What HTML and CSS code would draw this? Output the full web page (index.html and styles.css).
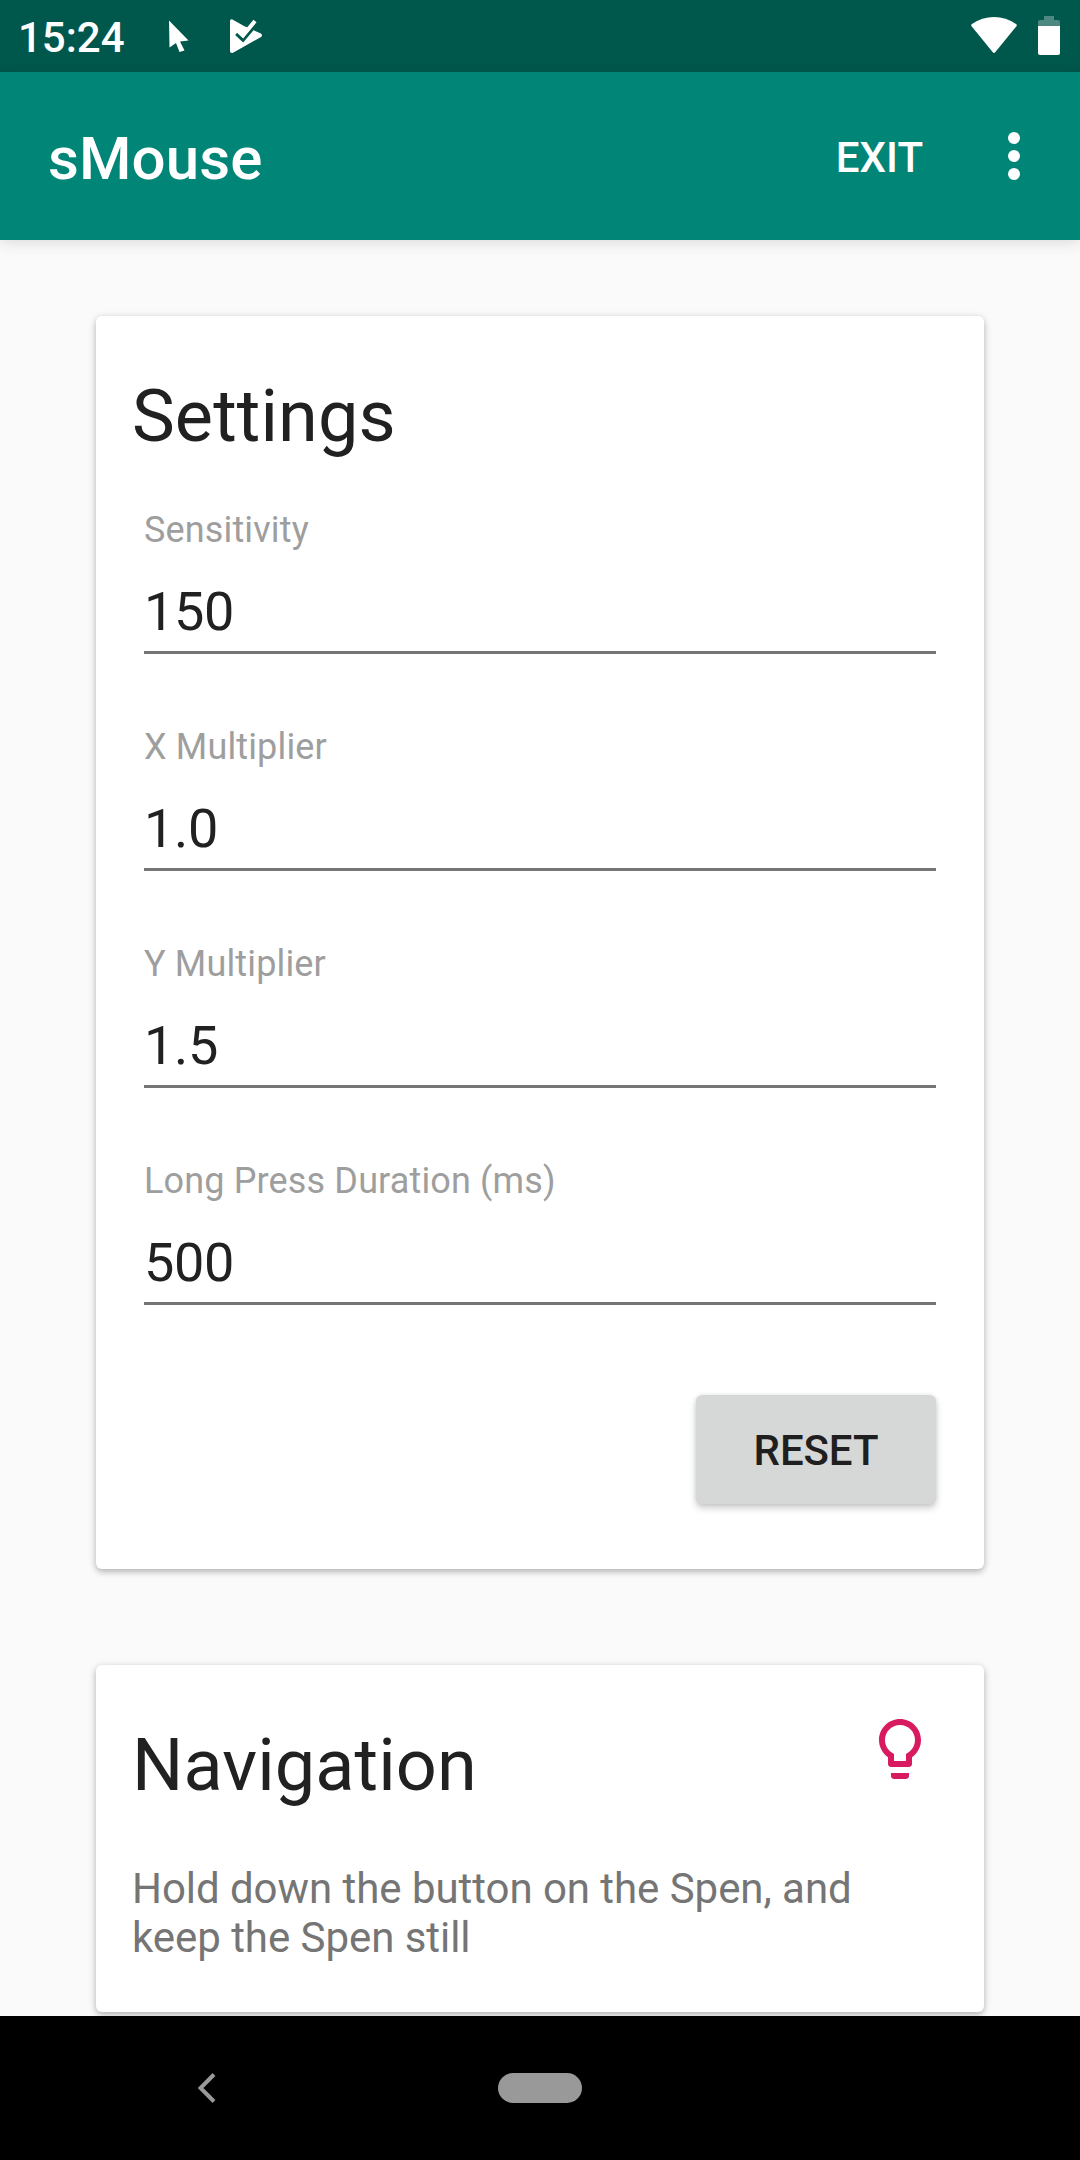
FILE: index.html
```html
<!DOCTYPE html>
<html lang="en">
<head>
	<meta charset="utf-8">
	<title>sMouse</title>
	<link rel="stylesheet" href="styles.css">
</head>
<body>
	<div class="status-bar">
		<span class="clock">15:24</span>
		<svg class="icon-cursor" width="20" height="33" viewBox="0 0 20 33">
			<path d="M0 0.5L19.5 20.5L11 21.5L15.5 30.5L10.5 32L7 23L0.5 27.5Z" fill="#fff"/>
		</svg>
		<svg class="icon-play" width="32" height="34" viewBox="0 0 32 34">
			<path d="M0 2Q0 0 2 0.3L14 7L31 14.5Q33 16.5 31 18L3 33.7Q0 34.500 0 32Z" fill="#fff"/>
			<path d="M6.500 14.500L13 20.500L26.500 4.500" fill="none" stroke="#00574b" stroke-width="4"/>
			<path d="M8 12L13 16.500L25 2" fill="none" stroke="#fff" stroke-width="4"/>
		</svg>
		<svg class="icon-wifi" width="46" height="36" viewBox="0 0 46 36">
			<path d="M0.600 9.300Q-0.400 8 1 7Q11 0 23 0T45 7Q46.400 8 45.400 9.300L24.200 35.200Q23 36.600 21.800 35.200Z" fill="#fff"/>
		</svg>
		<svg class="icon-battery" width="22" height="39" viewBox="0 0 22 39">
			<path d="M6 0H16V4H20Q22 4 22 6V10H0V6Q0 4 2 4H6Z" fill="#fff" fill-opacity=".3"/>
			<path d="M0 10H22V37Q22 39 20 39H2Q0 39 0 37Z" fill="#fff"/>
		</svg>
	</div>

	<header class="app-bar">
		<h1 class="app-title">sMouse</h1>
		<a class="exit">EXIT</a>
		<svg class="icon-more" width="12" height="48" viewBox="0 0 12 48">
			<circle cx="6" cy="6" r="6" fill="#fff"/>
			<circle cx="6" cy="24" r="6" fill="#fff"/>
			<circle cx="6" cy="42" r="6" fill="#fff"/>
		</svg>
	</header>

	<main class="content">
		<section class="card">
			<h2>Settings</h2>
			<form class="settings">
				<div class="field">
					<label for="sensitivity">Sensitivity</label>
					<input type="text" id="sensitivity" value="150">
				</div>
				<div class="field">
					<label for="xMultiplier">X Multiplier</label>
					<input type="text" id="xMultiplier" value="1.0">
				</div>
				<div class="field">
					<label for="yMultiplier">Y Multiplier</label>
					<input type="text" id="yMultiplier" value="1.5">
				</div>
				<div class="field">
					<label for="longPress">Long Press Duration (ms)</label>
					<input type="text" id="longPress" value="500">
				</div>
				<button type="reset" class="reset">RESET</button>
			</form>
		</section>

		<section class="card card-navigation">
			<div class="card-head">
				<h2>Navigation</h2>
				<svg class="icon-bulb" width="72" height="72" viewBox="0 0 24 24">
					<path fill="#d81b60" d="M9 21c0 .55.45 1 1 1h4c.55 0 1-.45 1-1v-1H9v1zM12 2C8.140 2 5 5.140 5 9c0 2.380 1.190 4.470 3 5.740V17c0 .55.45 1 1 1h6c.55 0 1-.45 1-1v-2.260c1.810-1.270 3-3.360 3-5.740 0-3.860-3.140-7-7-7zm2.850 11.100l-.85.6V16h-4v-2.300l-.85-.6C7.800 12.160 7 10.630 7 9c0-2.760 2.240-5 5-5s5 2.240 5 5c0 1.630-.8 3.160-2.150 4.100z"/>
				</svg>
			</div>
			<p>Hold down the button on the Spen, and keep the Spen still</p>
		</section>
	</main>

	<nav class="nav-bar">
		<svg class="icon-back" width="18" height="30" viewBox="0 0 18 30">
			<path d="M16 1.500L2.500 15L16 28.500" fill="none" stroke="#999" stroke-width="4"/>
		</svg>
		<span class="home-pill"></span>
	</nav>
</body>
</html>
```
FILE: styles.css
```css
* {
	box-sizing: border-box;
}

body {
	display: flex;
	flex-direction: column;
	width: 1080px;
	height: 2160px;
	margin: 0;
	overflow: hidden;
	font-family: Roboto, sans-serif;
	color: #212121;
	background: #fafafa;
}

svg {
	display: block;
	flex: none;
}

h1, h2, p {
	margin: 0;
}

/* status bar */
.status-bar {
	display: flex;
	align-items: flex-start;
	flex: none;
	height: 72px;
	padding: 0 20px 0 18px;
	background: #00574b;
}

.clock {
	width: 151px;
	margin-top: 13px;
	font-size: 42px;
	font-weight: 500;
	line-height: 49px;
	color: #fff;
}

.icon-cursor {
	margin-top: 20px;
}

.icon-play {
	margin: 19px 0 0 41px;
}

.icon-wifi {
	margin: 17px 1px 0 auto;
}

.icon-battery {
	margin: 16px 0 0 20px;
}

/* app bar */
.app-bar {
	display: flex;
	align-items: center;
	flex: none;
	position: relative;
	height: 168px;
	padding: 0 60px 0 48px;
	color: #fff;
	background: #008577;
	box-shadow: 0 3px 14px rgba(0,0,0,0.12);
}

.app-title {
	margin-top: 6px;
	font-size: 60px;
	font-weight: 500;
	line-height: 70px;
	letter-spacing: 0.1px;
}

.exit {
	margin: 2px 85px 0 auto;
	font-size: 42px;
	font-weight: 500;
	line-height: 49px;
}

/* cards */
.content {
	flex: 1;
	min-height: 0;
	padding: 76px 96px 0;
	overflow: hidden;
}

.card {
	height: 1253px;
	padding: 59px 48px 0 36px;
	background: #fff;
	border-radius: 6px;
	box-shadow: 0 3px 6px rgba(0,0,0,0.22), 0 1px 9px rgba(0,0,0,0.1);
}

.card-navigation {
	height: 347px;
	margin-top: 96px;
}

.card h2 {
	font-size: 72px;
	font-weight: 400;
	line-height: 84px;
	letter-spacing: 0.1px;
}

.card p {
	margin-top: 56px;
	font-size: 42px;
	line-height: 49px;
	letter-spacing: -0.05px;
	color: #757575;
}

.card-head {
	display: flex;
	justify-content: space-between;
}

.icon-bulb {
	margin-top: -11px;
}

/* settings form */
.settings {
	display: flex;
	flex-direction: column;
	gap: 72px;
	margin-top: 50px;
	padding-left: 12px;
}

.field label {
	display: block;
	margin-bottom: 29px;
	font-size: 36px;
	line-height: 42px;
	letter-spacing: 0.15px;
	color: #9e9e9e;
}

.field input {
	display: block;
	width: 100%;
	height: 74px;
	padding: 0 0 8px;
	font: 54px/63px Roboto, sans-serif;
	letter-spacing: -0.3px;
	color: #212121;
	background: none;
	border: none;
	border-bottom: 3px solid #757575;
	border-radius: 0;
	outline: none;
}

.reset {
	align-self: flex-end;
	width: 240px;
	height: 109px;
	margin-top: 18px;
	padding: 2px 0 0;
	font: 500 42px/49px Roboto, sans-serif;
	letter-spacing: -0.1px;
	color: #1f1f1f;
	background: #d6d7d7;
	border: none;
	border-radius: 6px;
	box-shadow: 0 4px 7px rgba(0,0,0,0.2), 0 0 4px rgba(0,0,0,0.08);
}

/* system navigation */
.nav-bar {
	display: flex;
	align-items: center;
	flex: none;
	position: relative;
	height: 144px;
	padding-left: 198px;
	background: #000;
}

.home-pill {
	width: 84px;
	height: 30px;
	margin-left: 282px;
	background: #999;
	border-radius: 15px;
}
```
